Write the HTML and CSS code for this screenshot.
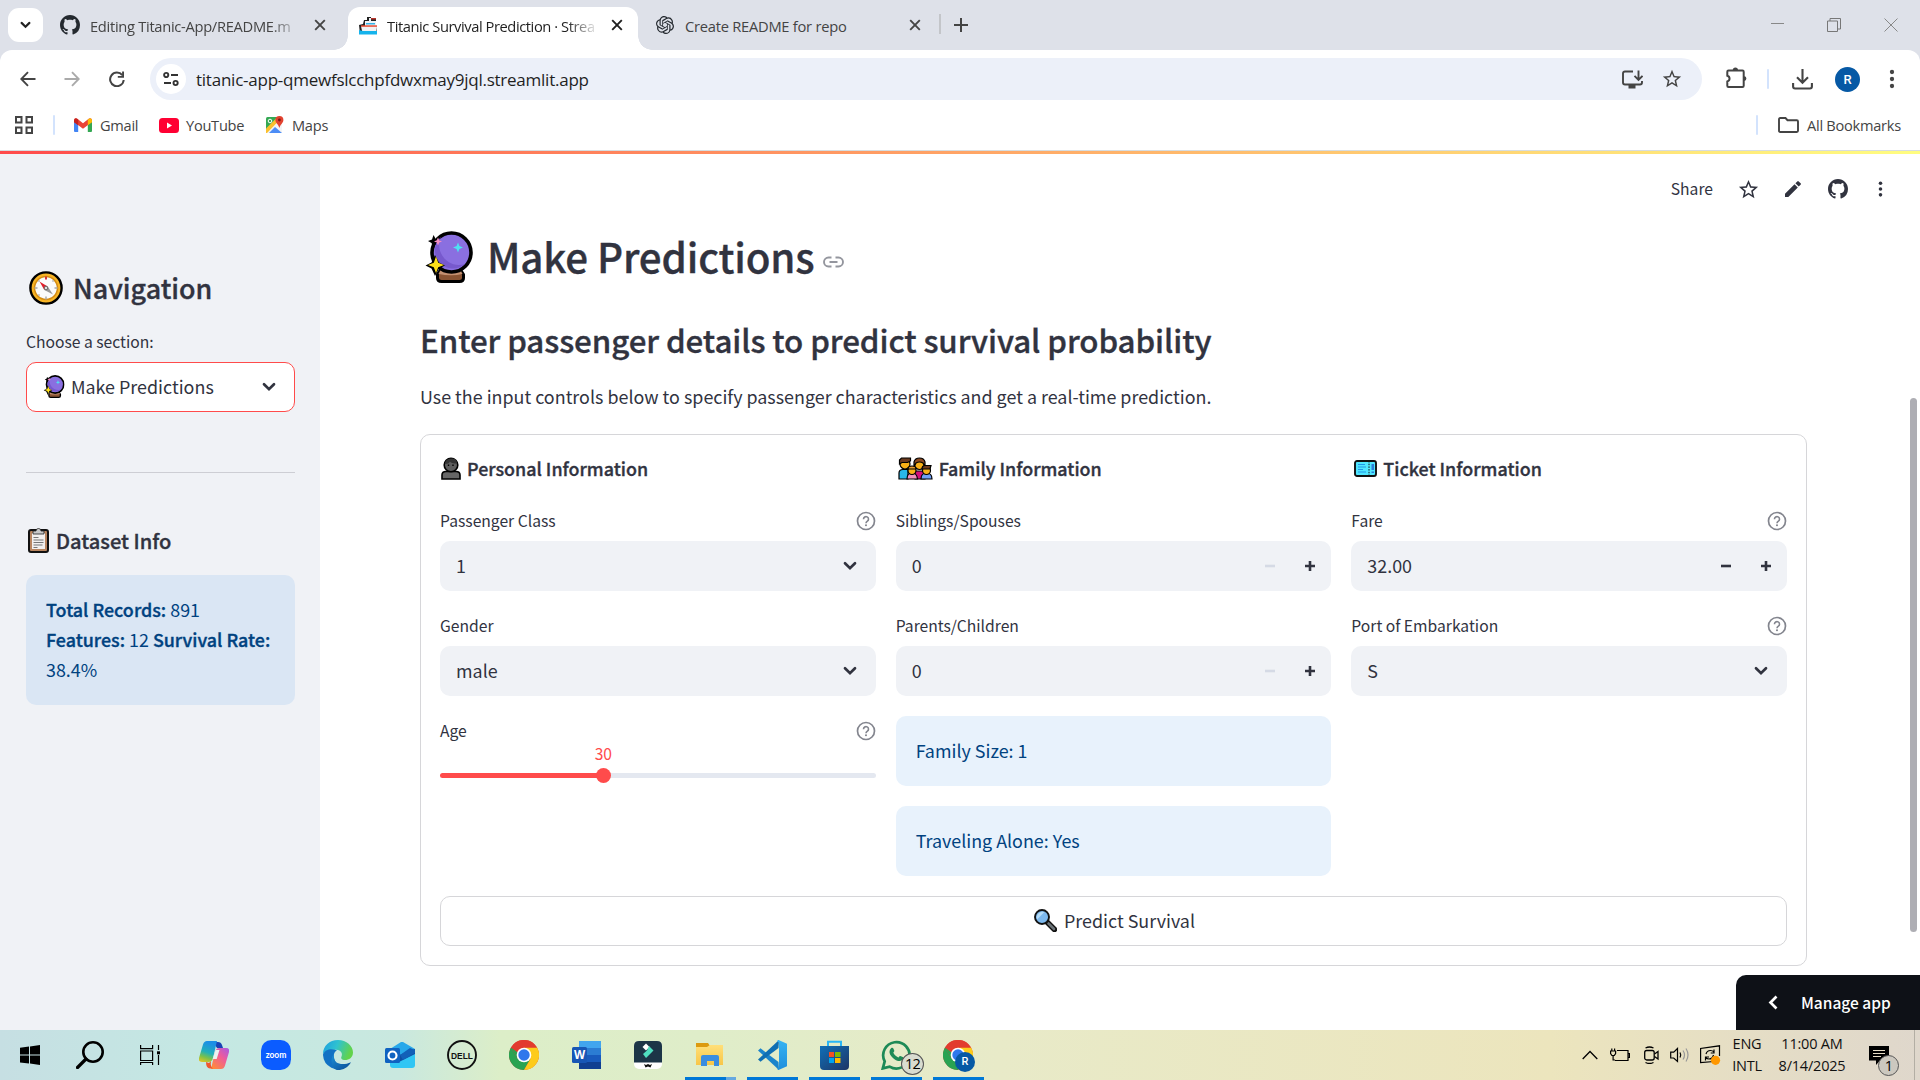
FILE: index.html
```html
<!DOCTYPE html>
<html lang="en">
<head>
<meta charset="utf-8">
<title>Titanic Survival Prediction · Streamlit</title>
<link rel="stylesheet" href="styles.css">
</head>
<body>
<svg class="defs" width="0" height="0" aria-hidden="true">
  <defs>
    <linearGradient id="edgeG" x1="0" y1="0" x2="1" y2="0.3"><stop offset="0" stop-color="#1b9de2"/><stop offset=".5" stop-color="#2fc2d0"/><stop offset="1" stop-color="#62d34c"/></linearGradient>
    <linearGradient id="edgeB" x1="0" y1="0" x2="1" y2="1"><stop offset="0" stop-color="#1a8fd8"/><stop offset="1" stop-color="#0c4c94"/></linearGradient>
    <linearGradient id="copA" x1="0.3" y1="0" x2="0" y2="1"><stop offset="0" stop-color="#1b8fe6"/><stop offset=".45" stop-color="#22b0b8"/><stop offset=".7" stop-color="#7cc14a"/><stop offset="1" stop-color="#f5c51d"/></linearGradient>
    <linearGradient id="copB" x1="1" y1="0" x2="0.2" y2="1"><stop offset="0" stop-color="#a45be6"/><stop offset=".45" stop-color="#ee5b9b"/><stop offset="1" stop-color="#ff8a3c"/></linearGradient>
    <linearGradient id="storeG" x1="0" y1="0" x2="1" y2="1"><stop offset="0" stop-color="#0f6fb8"/><stop offset="1" stop-color="#1f3564"/></linearGradient>
    <linearGradient id="vsG" x1="0" y1="0" x2="0" y2="1"><stop offset="0" stop-color="#35b3f3"/><stop offset="1" stop-color="#1f8fdc"/></linearGradient>
    <linearGradient id="foldG" x1="0" y1="0" x2="0" y2="1"><stop offset="0" stop-color="#ffdf79"/><stop offset="1" stop-color="#f8c648"/></linearGradient>
    <symbol id="github" viewBox="0 0 16 16"><path d="M8 0C3.58 0 0 3.58 0 8c0 3.54 2.29 6.53 5.47 7.59.4.07.55-.17.55-.38 0-.19-.01-.82-.01-1.49-2.01.37-2.53-.49-2.69-.94-.09-.23-.48-.94-.82-1.13-.28-.15-.68-.52-.01-.53.63-.01 1.08.58 1.23.82.72 1.21 1.87.87 2.33.66.07-.52.28-.87.51-1.07-1.78-.2-3.64-.89-3.64-3.95 0-.87.31-1.59.82-2.15-.08-.2-.36-1.02.08-2.12 0 0 .67-.21 2.2.82.64-.18 1.32-.27 2-.27s1.36.09 2 .27c1.53-1.04 2.2-.82 2.2-.82.44 1.1.16 1.92.08 2.12.51.56.82 1.27.82 2.15 0 3.07-1.87 3.75-3.65 3.95.29.25.54.73.54 1.48 0 1.07-.01 1.93-.01 2.2 0 .21.15.46.55.38A8.01 8.01 0 0 0 16 8c0-4.42-3.58-8-8-8z"/></symbol>
    <symbol id="close" viewBox="0 0 12 12"><path d="M1.2 1.2l9.6 9.6M10.800 1.200l-9.600 9.600" stroke="currentColor" stroke-width="1.900" fill="none"/></symbol>
    <symbol id="star" viewBox="0 0 24 24"><path d="M22 9.24l-7.190-.62L12 2 9.190 8.630 2 9.240l5.460 4.730L5.820 21 12 17.270 18.180 21l-1.630-7.030L22 9.240zM12 15.400l-3.760 2.270 1-4.280-3.320-2.880 4.380-.38L12 6.100l1.710 4.040 4.380.38-3.320 2.880 1 4.280L12 15.400z"/></symbol>
    <symbol id="dots" viewBox="0 0 6 20"><circle cx="3" cy="3" r="2.150"/><circle cx="3" cy="10" r="2.150"/><circle cx="3" cy="17" r="2.150"/></symbol>
    <symbol id="chev" viewBox="0 0 14 10"><path d="M2 2.300l5 4.900 5-4.900" fill="none" stroke="currentColor" stroke-width="2.700" stroke-linecap="round" stroke-linejoin="miter"/></symbol>
    <symbol id="help" viewBox="0 0 20 20"><circle cx="10" cy="10" r="8.500" fill="none" stroke="#83858e" stroke-width="1.700"/><path d="M7.500 8.200a2.500 2.500 0 1 1 3.900 2c-.9.600-1.400 1-1.400 2" fill="none" stroke="#83858e" stroke-width="1.600"/><circle cx="10" cy="14.300" r="1.050" fill="#83858e"/></symbol>
    <symbol id="ball" viewBox="0 0 48 52">
      <path d="M16 38h19l3.500 5.500v3.500q0 3.500-4 3.500H16.500q-4 0-4-3.500v-4z" fill="#8a5433" stroke="#000" stroke-width="3" stroke-linejoin="round"/>
      <path d="M16 38h19l2.500 5q-11 2.500-24 0z" fill="#c49070"/>
      <circle cx="26.500" cy="21.500" r="19.500" fill="#8a6fe0" stroke="#000" stroke-width="3.600"/>
      <path d="M16 6A18 18 0 1 0 40 33C24 38 9 22 16 6z" fill="#7759cd"/>
      <path d="M8.500 4l2.500 4.500L15.500 10 11 12l-2 5-2.500-5L3 10l4-1.500z" fill="#000"/><path d="M13 6.500l1.200 2.800L17 10.400l-2.800 1.100L13 14.400l-1.200-2.900L9 10.400l2.800-1.100z" fill="#f48fc4"/>
      <path d="M10 24l4 7.500 6 3-6 3-4 7.500-3.500-7.500-6-3 6-3z" fill="#000"/><path d="M11 25.500l2.200 6.300 5.800 2.200-5.800 2.200L11 42l-2.200-5.800L3 34l5.800-2.200z" fill="#ffe11a"/>
      <path d="M33 11.500l1.400 3.600 3.600 1.400-3.600 1.400L33 21.500l-1.400-3.600-3.600-1.400 3.600-1.400z" fill="#4fe0f2"/>
    </symbol>
    <symbol id="chrome" viewBox="0 0 30 30"><circle cx="15" cy="15" r="15" fill="#e23b2e"/><path d="M2 7.500A15 15 0 0 0 15 30l6.500-11.250L15 15z" fill="#29a352"/><path d="M28 7.500A15 15 0 0 1 15 30l6.500-11.200L15 7.500z" fill="#fdcb1b"/><path d="M2 7.500L8.500 18.800 15 15V7.500h13A15 15 0 0 0 2 7.500z" fill="#e23b2e"/><path d="M2 7.500l6.500 11.300L12 15z" fill="#29a352"/><circle cx="15" cy="15" r="7.300" fill="#fff"/><circle cx="15" cy="15" r="5.700" fill="#2f78ec"/></symbol>
  </defs>
</svg>

<header class="browser">
  <div class="tabstrip">
    <button class="tab-search"><svg width="11" height="8" viewBox="0 0 14 10"><use href="#chev"/></svg></button>
    <div class="tab tab-first"><svg class="fav" width="20" height="20"><use href="#github"/></svg><span class="tab-title t1">Editing Titanic-App/README.m</span><svg class="x" width="12" height="12"><use href="#close"/></svg></div>
    <div class="tab tab-active">
      <svg class="fav" width="18" height="19" viewBox="0 0 18 19"><path d="M0 9l4-1 1-4h3V1h4v1h5v8l1 3v5H1z" fill="#222"/><path d="M6 5h4V2h2v3h5v5H6z" fill="#eef3f6"/><path d="M12 2h5v1.500h-5z" fill="#b6332a"/><path d="M7 7h9v1.500H7z" fill="#34b5e8"/><path d="M2 10h16l-.500 5H3z" fill="#f2f2f2"/><path d="M2 9.300h16v1.500H2z" fill="#e8492f"/><path d="M0 14l4 1h14v3.500H0z" fill="#15b3ec"/></svg>
      <span class="tab-title t2">Titanic Survival Prediction · Strea</span><svg class="x" width="12" height="12"><use href="#close"/></svg></div>
    <div class="tab tab-third"><svg class="fav" width="18" height="18" viewBox="0 0 24 24"><path d="M22.2819 9.8211a5.9847 5.9847 0 0 0-.5157-4.9108 6.0462 6.0462 0 0 0-6.5098-2.9A6.0651 6.0651 0 0 0 4.9807 4.1818a5.9847 5.9847 0 0 0-3.9977 2.9 6.0462 6.0462 0 0 0 .7427 7.0966 5.98 5.98 0 0 0 .511 4.9107 6.051 6.051 0 0 0 6.5146 2.9001A5.9847 5.9847 0 0 0 13.2599 24a6.0557 6.0557 0 0 0 5.7718-4.2058 5.9894 5.9894 0 0 0 3.9977-2.9001 6.0557 6.0557 0 0 0-.7475-7.0729zm-9.022 12.6081a4.4755 4.4755 0 0 1-2.8764-1.0408l.1419-.0804 4.7783-2.7582a.7948.7948 0 0 0 .3927-.6813v-6.7369l2.02 1.1686a.071.071 0 0 1 .038.052v5.5826a4.504 4.504 0 0 1-4.4945 4.4944zm-9.6607-4.1254a4.4708 4.4708 0 0 1-.5346-3.0137l.142.0852 4.783 2.7582a.7712.7712 0 0 0 .7806 0l5.8428-3.3685v2.3324a.0804.0804 0 0 1-.0332.0615L9.74 19.9502a4.4992 4.4992 0 0 1-6.1408-1.6464zM2.3408 7.8956a4.485 4.485 0 0 1 2.3655-1.9728V11.6a.7664.7664 0 0 0 .3879.6765l5.8144 3.3543-2.0201 1.1685a.0757.0757 0 0 1-.071 0l-4.8303-2.7865A4.504 4.504 0 0 1 2.3408 7.872zm16.5963 3.8558L13.1038 8.364 15.1192 7.2a.0757.0757 0 0 1 .071 0l4.8303 2.7913a4.4944 4.4944 0 0 1-.6765 8.1042v-5.6772a.79.79 0 0 0-.407-.667zm2.0107-3.0231l-.142-.0852-4.7735-2.7818a.7759.7759 0 0 0-.7854 0L9.409 9.2297V6.8974a.0662.0662 0 0 1 .0284-.0615l4.8303-2.7866a4.4992 4.4992 0 0 1 6.6802 4.66zM8.3065 12.863l-2.02-1.1638a.0804.0804 0 0 1-.038-.0567V6.0742a4.4992 4.4992 0 0 1 7.3757-3.4537l-.142.0805L8.704 5.459a.7948.7948 0 0 0-.3927.6813zm1.0976-2.3654l2.602-1.4998 2.6069 1.4998v2.9994l-2.5974 1.4997-2.6067-1.4997Z"/></svg><span class="tab-title t3">Create README for repo</span><svg class="x" width="12" height="12"><use href="#close"/></svg></div>
    <span class="tab-sep"></span>
    <svg class="plus" width="14" height="14" viewBox="0 0 14 14"><path d="M7 0v14M0 7h14" stroke="#444" stroke-width="2"/></svg>
    <div class="win">
      <svg width="14" height="14" viewBox="0 0 14 14"><path d="M1 5.500h13" stroke="#888"/></svg>
      <svg width="14" height="14" viewBox="0 0 14 14"><path d="M.5 3h10v10.500H.5zM3 3V.5h10.500V11H11" fill="none" stroke="#777"/></svg>
      <svg width="14" height="14" viewBox="0 0 14 14"><path d="M.5.5l13 13M13.500.5l-13 13" stroke="#888"/></svg>
    </div>
  </div>

  <div class="toolbar">
    <svg class="nav-b" width="16" height="16" viewBox="0 0 16 16"><path d="M15.500 8H1.500M8 1.200L1.300 8 8 14.800" fill="none" stroke="#444" stroke-width="1.900"/></svg>
    <svg class="nav-f" width="16" height="16" viewBox="0 0 16 16"><path d="M.5 8h14M8 1.200L14.700 8 8 14.800" fill="none" stroke="#aaa" stroke-width="1.900"/></svg>
    <svg class="nav-r" width="16" height="16" viewBox="0 0 16 16"><path d="M13.300 4.200A6.800 6.800 0 1 0 14.700 9" fill="none" stroke="#444" stroke-width="2"/><path d="M15 .5v6.300H8.800V4.900h4.300V.5z" fill="#444"/></svg>
    <div class="omnibox">
      <span class="site"><svg width="16" height="16" viewBox="0 0 16 16" fill="none" stroke="#333" stroke-width="1.900"><circle cx="3.200" cy="4" r="2.100"/><path d="M8 4h7M1 12h7"/><circle cx="12.600" cy="12" r="2.100"/></svg></span>
      <span class="url">titanic-app-qmewfslcchpfdwxmay9jql.streamlit.app</span>
      <svg class="install" width="21" height="19" viewBox="0 0 21 19"><path d="M11 1.500H3q-2 0-2 2v9q0 2 2 2h15q2 0 2-2V11" fill="none" stroke="#444" stroke-width="1.900"/><path d="M6.500 15h7v3.500h-7z" fill="#444"/><path d="M16.500.5v9M12.500 5.800l4 4 4-4" fill="none" stroke="#444" stroke-width="1.900"/></svg>
      <svg width="22" height="22" viewBox="0 0 24 24" fill="#444"><use href="#star"/></svg>
    </div>
    <svg class="puzzle" width="21" height="21" viewBox="0 0 21 21"><path d="M2.500 3.500h14q1.200 0 1.200 1.200v14q0 1.200-1.200 1.200h-14q-1.200 0-1.200-1.200v-4.200a3 3 0 0 0 0-5.800v-4q0-1.200 1.200-1.200z" fill="none" stroke="#444" stroke-width="2"/><path d="M6.800 3a2.600 2.600 0 0 1 5.200 0zM18 9.200a2.400 2.400 0 0 1 0 4.800z" fill="#444"/></svg>
    <span class="tsep"></span>
    <svg class="dl" width="21" height="21" viewBox="0 0 21 21" fill="none" stroke="#444" stroke-width="2.100"><path d="M10.500 0v13.500M5 8.300l5.500 5.500L16 8.300M1.100 14v3.500q0 2 2 2h14.800q2 0 2-2V14"/></svg>
    <span class="avatar">R</span>
    <svg class="more" width="6" height="20" fill="#444"><use href="#dots"/></svg>
  </div>

  <div class="bookmarks">
    <svg width="18" height="18" viewBox="0 0 18 18" fill="none" stroke="#444" stroke-width="2"><path d="M1 1h5.500v5.500H1zM11.500 1H17v5.500h-5.500zM1 11.500h5.500V17H1zM11.500 11.500H17V17h-5.500z"/></svg>
    <span class="tsep bs1"></span>
    <svg class="gm" width="18" height="14" viewBox="0 0 18 14"><path d="M0 2.500V13q0 1 1 1h3.200V6z" fill="#4285f4"/><path d="M18 2.500V13q0 1-1 1h-3.200V6z" fill="#34a853"/><path d="M0 2Q.5-.5 3 .5l6 4.700 6-4.700q2.500-1 3 1.500v2.100l-9 6.700L0 4.100z" fill="#ea4335"/><path d="M0 2.200Q.3.300 2 .2L4.200 1.500v5.800L0 4.200z" fill="#c5221f"/><path d="M18 2.200Q17.700.3 16 .2l-2.200 1.300v5.800L18 4.200z" fill="#fbbc04"/></svg>
    <span class="bm b1">Gmail</span>
    <svg class="yt" width="20" height="15" viewBox="0 0 20 15"><rect width="20" height="15" rx="3.500" fill="#f03"/><path d="M8 4.500v6l5-3z" fill="#fff"/></svg>
    <span class="bm b2">YouTube</span>
    <svg class="mp" width="18" height="18" viewBox="0 0 18 18"><rect x="0" y="1" width="16" height="16" rx="1.500" fill="#34a853"/><path d="M0 17L14 3l2 2v12z" fill="#f4f4f4"/><path d="M0 12.500L10.500 2l2.500 2.500L1 17H0z" fill="#fbc02d"/><path d="M3 17l6-6 7 6z" fill="#4c8df6"/><circle cx="4" cy="5" r="1.800" fill="none" stroke="#fff"/><path d="M13.400 0a4 4 0 0 1 4 4c0 3-3 4-4 8-1-4-4-5-4-8a4 4 0 0 1 4-4z" fill="#e2422f"/><circle cx="13.400" cy="4" r="1.400" fill="#7d1712"/></svg>
    <span class="bm b3">Maps</span>
    <span class="tsep bs2"></span>
    <svg class="fold" width="21" height="16" viewBox="0 0 21 16"><path d="M1 2.200Q1 1 2.200 1h5.300l2 2.200h9.300Q20 3.200 20 4.400v9.400q0 1.200-1.200 1.200H2.200Q1 15 1 13.800z" fill="none" stroke="#444" stroke-width="1.900"/></svg>
    <span class="bm b4">All Bookmarks</span>
  </div>
</header>
<div class="decoration"></div>

<div class="app">
  <aside class="sidebar">
    <h2 class="nav-title"><svg width="34" height="34" viewBox="0 0 34 34"><circle cx="17" cy="17" r="15.600" fill="#f8b526" stroke="#000" stroke-width="2.400"/><circle cx="17" cy="17" r="11.500" fill="#fbfbfb" stroke="#d58c12" stroke-width="1.500"/><path d="M17 5.500v3" stroke="#d13438" stroke-width="2"/><path d="M17 25.500v3M5.500 17h3M25.500 17h3M9.500 9.500l1 1M24.500 9.500l-1 1M9.500 24.500l1-1" stroke="#aaa" stroke-width="1.500"/><path d="M10.500 10.500l8.200 5-3.400 3.400z" fill="#e01e2b"/><path d="M24 23.500l-8.700-4.600 3.400-3.400z" fill="#999"/><circle cx="17" cy="17" r="1.800" fill="#ddd" stroke="#666"/></svg><span class="n1">Navigation</span></h2>
    <label class="label">Choose a section:</label>
    <div class="select focus"><svg width="22" height="23" viewBox="0 0 48 52"><use href="#ball"/></svg><span>Make Predictions</span><svg class="chev" width="14" height="10"><use href="#chev"/></svg></div>
    <hr>
    <h3 class="ds-title"><svg width="21" height="26" viewBox="0 0 21 26"><rect x="1" y="3" width="19" height="22" rx="2" fill="#b9855f" stroke="#111" stroke-width="2"/><path d="M4 6h13v16H4z" fill="#f3f0ee"/><path d="M5 7V4h3a2.500 2.500 0 0 1 5 0h3v3z" fill="#c9c9c9" stroke="#222" stroke-width=".8"/><path d="M5.500 10.500h5M5.500 13h10M5.500 15.500h10M5.500 18h9M5.500 20.500h4" stroke="#777" stroke-width="1"/></svg><span>Dataset Info</span></h3>
    <div class="info dark"><b>Total Records:</b> 891<br><b>Features:</b> 12 <b>Survival Rate:</b><br>38.4%</div>
  </aside>

  <main class="main">
    <div class="app-tools">
      <span class="share">Share</span>
      <svg class="a1" width="23" height="23" viewBox="0 0 24 24"><use href="#star"/></svg>
      <svg class="a2" width="16" height="16" viewBox="0 0 16 16"><path d="M0 12.700L9.500 3.200l3.300 3.300L3.300 16H0zM10.400 2.300l1.900-1.900q.7-.6 1.400 0l1.900 1.900q.7.700 0 1.400l-1.900 1.900z"/></svg>
      <svg class="a3" width="20" height="20"><use href="#github"/></svg>
      <svg class="a4" width="5" height="18" viewBox="0 0 6 20"><use href="#dots"/></svg>
    </div>
    <h1><svg width="48" height="52"><use href="#ball"/></svg><span>Make Predictions</span><svg class="link" width="21" height="12" viewBox="0 0 21 12"><path d="M8.500 1.500h-3a4.500 4.500 0 0 0 0 9h3M12.500 1.500h3a4.500 4.500 0 0 1 0 9h-3M6.500 6h8" fill="none" stroke="#94969e" stroke-width="1.900"/></svg></h1>
    <h2 class="sub">Enter passenger details to predict survival probability</h2>
    <p class="lead">Use the input controls below to specify passenger characteristics and get a real-time prediction.</p>

    <form class="form">
      <div class="cols">
        <section class="col">
          <h4><svg class="e1" width="20" height="23" viewBox="0 0 20 23"><path d="M1 22v-4q0-3.500 4-3.500h10q4 0 4 3.500v4z" fill="#666" stroke="#000" stroke-width="1.600"/><circle cx="10" cy="8" r="6.800" fill="#5e5e5e" stroke="#000" stroke-width="1.600"/><path d="M4 7q0-5 6-5.500t6 5q-6 0-7-2-1 2.500-5 2.500z" fill="#333"/><path d="M7.500 7.500v1.500M12 7.500v1.500" stroke="#000" stroke-width="1.400"/></svg><span>Personal Information</span></h4>
          <div class="field"><div class="label">Passenger Class<svg width="20" height="20"><use href="#help"/></svg></div><div class="select"><span>1</span><svg class="chev" width="14" height="10"><use href="#chev"/></svg></div></div>
          <div class="field"><div class="label">Gender</div><div class="select"><span>male</span><svg class="chev" width="14" height="10"><use href="#chev"/></svg></div></div>
          <div class="field"><div class="label">Age<svg width="20" height="20"><use href="#help"/></svg></div>
            <div class="slider"><div class="track" style="background:linear-gradient(to right,#ff4b4b 37.5%,#e4e8f0 37.5%)"></div><div class="thumb" style="left:37.5%"><span>30</span></div></div></div>
        </section>
        <section class="col">
          <h4><svg class="e2" width="35" height="23" viewBox="0 0 35 23" stroke="#000" stroke-width="1.200"><path d="M1 22v-6q0-3.500 4-3.500h5v9.500z" fill="#29b7e8"/><path d="M17 22v-8h6q4 0 4 3v5z" fill="#d6107a"/><circle cx="7" cy="7" r="5" fill="#f9b016"/><path d="M1.500 7V3l2-2h9v3l-3 1.500H4z" fill="#6b3a1e"/><circle cx="21.500" cy="7.500" r="5" fill="#f9b016"/><path d="M16 10V5q1-4 5.500-4T27 5v5l-2-4q-3.500-2-7 0z" fill="#8b4a22"/><path d="M9 22q0-6 5-6t5.500 6z" fill="#f291bd"/><circle cx="14" cy="13.500" r="4" fill="#f9b016"/><path d="M10 12q0-3 4-3t4 3z" fill="#e59a2e"/><path d="M23 22q0-6 5.500-6t5.500 6z" fill="#6fa0f7"/><circle cx="28.500" cy="13.500" r="4" fill="#f9b016"/><path d="M24 12q0-3.500 3-3.500h6l-1 3.500z" fill="#6b3a1e"/></svg><span>Family Information</span></h4>
          <div class="field"><div class="label">Siblings/Spouses</div><div class="select num"><span>0</span><svg class="mn off" width="10" height="10" viewBox="0 0 10 10"><path d="M0 5h10"/></svg><svg class="pl" width="10" height="10" viewBox="0 0 10 10"><path d="M0 5h10M5 0v10"/></svg></div></div>
          <div class="field"><div class="label">Parents/Children</div><div class="select num"><span>0</span><svg class="mn off" width="10" height="10" viewBox="0 0 10 10"><path d="M0 5h10"/></svg><svg class="pl" width="10" height="10" viewBox="0 0 10 10"><path d="M0 5h10M5 0v10"/></svg></div></div>
          <div class="info">Family Size: 1</div>
          <div class="info">Traveling Alone: Yes</div>
        </section>
        <section class="col">
          <h4><svg class="e3" width="23" height="17" viewBox="0 0 23 17"><rect x="1" y="1" width="21" height="15" rx="2" fill="#50e6ff" stroke="#111" stroke-width="1.900"/><path d="M15 1v15" stroke="#111" stroke-dasharray="1.500 1.200"/><path d="M4 4.500h7M4 7h8M4 9.500h5M4 12h8" stroke="#2196e8" stroke-width="1.200"/><path d="M17.500 4h2.500v6h-2.500zM17.500 11.500H20V13h-2.500z" fill="#2b7fd8"/></svg><span>Ticket Information</span></h4>
          <div class="field"><div class="label">Fare<svg width="20" height="20"><use href="#help"/></svg></div><div class="select num"><span>32.00</span><svg class="mn" width="10" height="10" viewBox="0 0 10 10"><path d="M0 5h10"/></svg><svg class="pl" width="10" height="10" viewBox="0 0 10 10"><path d="M0 5h10M5 0v10"/></svg></div></div>
          <div class="field"><div class="label">Port of Embarkation<svg width="20" height="20"><use href="#help"/></svg></div><div class="select"><span>S</span><svg class="chev" width="14" height="10"><use href="#chev"/></svg></div></div>
        </section>
      </div>
      <button class="predict" type="button"><svg width="23" height="23" viewBox="0 0 23 23"><path d="M13 13l7.500 7.500" stroke="#111" stroke-width="5.500" stroke-linecap="round"/><path d="M14.500 14.500l5.500 5.500" stroke="#6b7378" stroke-width="2.600" stroke-linecap="round"/><circle cx="8" cy="8" r="7" fill="#7db9ee" stroke="#111" stroke-width="1.900"/><path d="M3 10.500A6 6 0 0 1 10.500 3z" fill="#b5dcf8"/></svg><span>Predict Survival</span></button>
    </form>
    <div class="scroll-thumb"></div>
    <div class="manage"><svg width="10" height="15" viewBox="0 0 10 15"><path d="M8.500 1.500l-6 6 6 6" fill="none" stroke="#fff" stroke-width="2.700"/></svg><span>Manage app</span></div>
  </main>
</div>

<footer class="taskbar">
  <span class="tb sys"><svg width="20" height="20" viewBox="0 0 20 20"><path d="M0 2.800l9-1.200v8H0zM10 1.400L20 0v9.600H10zM0 10.600h9v8l-9-1.200zM10 10.600h10V20l-10-1.400z"/></svg></span>
  <span class="tb sys"><svg width="28" height="28" viewBox="0 0 28 28"><circle cx="17" cy="11" r="9.700" fill="none" stroke="#000" stroke-width="2.600"/><path d="M10 18l-8.500 8.500" stroke="#000" stroke-width="3.200" stroke-linecap="round"/></svg></span>
  <span class="tb sys last"><svg width="20" height="20" viewBox="0 0 20 20" fill="none" stroke="#000" stroke-width="1.200"><path d="M.6 0v3.600h12V0M.6 6h12v9.500H.6zM.6 20v-2.500h12V20M18.500 0v5M18.500 10v10"/><path d="M17 6.300h3v3h-3z" fill="#000" stroke="none"/></svg></span>
  <span class="tb"><svg width="30" height="28" viewBox="0 0 30 28"><path d="M14 1h5q3 0 4 3l1 3h-6z" fill="#1843b5"/><path d="M8 0h10l-4 17q-1 4-4.500 4H3q-4 0-3-4L4 3.500Q5 0 8 0z" fill="url(#copA)"/><path d="M22 28H12l4-17q1-4 4.500-4H27q4 0 3 4l-4 13.500Q25 28 22 28z" fill="url(#copB)"/><path d="M12 20l-2 2-3-1q0 6 4 6.500h3q-3-2-2-7.500z" fill="#f0562e"/><path d="M16.500 9h4l-2.800 9h-4z" fill="#e9f3f0"/></svg></span>
  <span class="tb"><svg width="30" height="30" viewBox="0 0 30 30"><rect width="30" height="30" rx="10.500" fill="#0b5cff"/><text x="15" y="17.500" text-anchor="middle" font-family="Lato, sans-serif" font-weight="700" font-size="8.500" fill="#fff">zoom</text></svg></span>
  <span class="tb"><svg width="30" height="30" viewBox="0 0 30 30"><path d="M0 14C0 6 6.500 0 15 0s15 6 15 12.500c0 5-4 7.500-8 7.500-3 0-4.500-1.500-3.500-3.500 1-2 .5-5.500-3.500-6.500C9 9 3 10 0 14z" fill="url(#edgeG)"/><path d="M0 14.500C2 9 9 8 14 10.500c-3 1-4 5-2.500 9 1.500 5 6.500 9.500 12 7A15 15 0 0 1 0 15z" fill="#1272c4"/><path d="M11 14c-2 9 7 12.500 17 8.200-3 5.800-9.500 8.500-15 7.600-5-2.800-6-11.800-2-15.800z" fill="url(#edgeB)"/></svg></span>
  <span class="tb"><svg width="30" height="26" viewBox="0 0 30 26"><path d="M5 7L16 0q1-.4 2 0l12 7v10L6 22z" fill="#28a8ea"/><path d="M30 8v15q0 3-3 3H8q-3 0-3-3v-8z" fill="#30c6f4"/><path d="M30 7v5L14 20H6v-4z" fill="#0f4fa3"/><path d="M15 13l10-7 5 2v3L18 18z" fill="#1260b8"/><rect y="6" width="15" height="15" rx="1.500" fill="#0f62c1"/><circle cx="7.500" cy="13.500" r="4" fill="none" stroke="#fff" stroke-width="2.200"/></svg></span>
  <span class="tb"><svg width="30" height="30" viewBox="0 0 30 30"><circle cx="15" cy="15" r="14" fill="none" stroke="#111" stroke-width="1.900"/><text x="15" y="18.500" text-anchor="middle" font-family="Liberation Sans, sans-serif" font-weight="700" font-size="9.500" textLength="22" lengthAdjust="spacingAndGlyphs" fill="#111">DELL</text></svg></span>
  <span class="tb"><svg width="30" height="30"><use href="#chrome"/></svg></span>
  <span class="tb"><svg width="29" height="28" viewBox="0 0 29 28"><path d="M7 0h22v7H7z" fill="#41a5ee"/><path d="M7 7h22v7H7z" fill="#2b7cd3"/><path d="M7 14h22v7H7z" fill="#185abd"/><path d="M7 21h22v7H7z" fill="#103f91"/><rect y="6" width="15" height="16" rx="1.500" fill="#1756b5"/><text x="7.500" y="18.300" text-anchor="middle" font-family="Open Sans, sans-serif" font-weight="700" font-size="11.500" fill="#fff">W</text></svg></span>
  <span class="tb"><svg width="28" height="28" viewBox="0 0 28 28"><rect width="28" height="28" rx="5" fill="#fff"/><path d="M0 21.500V5q0-5 5-5h18q5 0 5 5v16.500z" fill="#1c3547"/><path d="M12 2.500L15.500 6 12 9.500 8.500 6z" fill="#fff"/><path d="M15 5l4.500 4.500L12 17l-3-4 4-3.500z" fill="#50dfc0"/><path d="M10 23l2 1 2-1 2 1 2-1-1.500 3.500L14 25.500l-2.500 1z" fill="#111"/></svg></span>
  <span class="tb run light"><svg width="28" height="24" viewBox="0 0 28 24"><path d="M0 0h12l2 3v2H0z" fill="#dc9a10"/><path d="M0 4h11l3-2h13v20H0z" fill="url(#foldG)"/><path d="M5 23V14q0-2 2-2h14q2 0 2 2v9h-5v-5h-7v5z" fill="#3b8de0"/></svg></span>
  <span class="tb run"><svg width="30" height="30" viewBox="0 0 30 30"><path d="M1 10.500l2.500-2.200 18 13.800L22 30z" fill="#1b84cb"/><path d="M1 19.500l2.500 2.200 18-13.600L22 0z" fill="#0f6fb3"/><path d="M21.500 0L30 3.800v22.400L21.500 30l-1.800-1.200 2.300-.8V2.500L19.700 1z" fill="url(#vsG)"/></svg></span>
  <span class="tb run"><svg width="29" height="30" viewBox="0 0 29 30"><path d="M8 8V1.800h13V8" fill="none" stroke="#28b5f5" stroke-width="2"/><path d="M0 6h29v20q0 4-4 4H4q-4 0-4-4z" fill="url(#storeG)"/><path d="M9 12h5v5H9z" fill="#f25022"/><path d="M15 12h5.500v5H15z" fill="#7fba00"/><path d="M9 18h5v5H9z" fill="#00a4ef"/><path d="M15 18h5.500v5H15z" fill="#ffb900"/></svg></span>
  <span class="tb run"><svg width="30" height="30" viewBox="0 0 30 30"><path d="M1.800 28.400l1.900-7A13.200 13.200 0 1 1 8.600 26.600z" fill="none" stroke="#1d8a57" stroke-width="2.700"/><path d="M10.300 8c1-.8 1.800-.2 2.200.8l.8 2c.2.800-.8 1.500-1 2 1 2.200 2.800 3.800 5 4.600.7-.4 1.200-1.700 2-1.500l2.500 1.200c1 .5.700 1.700 0 2.500-2 2.200-5 1.600-8-.2-2.500-1.600-5-4.600-5.300-7-.1-1.600.5-3.400 1.800-4.400z" fill="#1d8a57"/></svg><i class="badge">12</i></span>
  <span class="tb run"><svg width="30" height="30"><use href="#chrome"/></svg><i class="badge r">R</i></span>

  <div class="tray">
    <svg width="16" height="10" viewBox="0 0 16 10"><path d="M.7 9L8 1.500 15.300 9" fill="none" stroke="#000" stroke-width="1.300"/></svg>
    <svg class="y1" width="20" height="14" viewBox="0 0 20 14" fill="none" stroke="#000" stroke-width="1.200"><path d="M7 2.500h11v10H5M18 5.500h1.400v4H18M.6 3h5v2.500l-1.300 2H1.900L.6 5.500zM1.800 3V.5M4.600 3V.5M3.100 7.500v4.500h2"/></svg>
    <svg class="y2" width="15" height="18" viewBox="0 0 15 18" fill="none" stroke="#000" stroke-width="1.300"><rect x=".7" y="4.500" width="9.500" height="9.500" rx="2"/><path d="M10.500 8l3.500-2.500v7.500l-3.500-2.500M1.500 2q4-2 8 0M1.500 16.500q4 2 8 0"/></svg>
    <svg class="y3" width="21" height="16" viewBox="0 0 21 16" fill="none" stroke="#000" stroke-width="1.200"><path d="M.7 5.200h3L7.500 1.500v13L3.700 11h-3zM10 5.500q1.500 2.500 0 5"/><path d="M13 3.500q3 4.500 0 9M16 1.500q4 6.500 0 13" stroke="#999"/></svg>
    <svg class="y4" width="21" height="20" viewBox="0 0 21 20" fill="none" stroke="#000" stroke-width="1.200"><path d="M14 16.500L.6 17.500V3.500L19.500.8V11M6 9q1-3.500 4.500-3.500 2 0 3.500 1.500M14 4.500V8h-3.300M13.500 10q-1 4-4.500 4-2 0-3.500-1.500M5.500 15.500V12H9"/><circle cx="15.500" cy="15.300" r="4.600" fill="#ff9800" stroke="none"/></svg>
    <div class="tt lang"><span class="w1">ENG</span><span class="w2">INTL</span></div>
    <div class="tt clock"><span class="w3">11:00 AM</span><span class="w4">8/14/2025</span></div>
    <div class="ac"><svg width="20" height="19" viewBox="0 0 20 19"><path d="M0 0h20v14.500H11L7 19v-4.500H0z"/><path d="M4 4.500h12M4 7.500h12M4 10.500h8" stroke="#e6ddc6" stroke-width="1.200"/></svg><i class="badge one">1</i></div>
    <span class="peek"></span>
  </div>
</footer>
</body>
</html>
```
FILE: styles.css
```css
* { box-sizing: border-box; }
body { margin: 0; width: 1920px; height: 1080px; overflow: hidden; display: flex; flex-direction: column; background: #fff; color: #31333f; font-family: "Noto Sans CJK JP", "Noto Sans CJK SC", sans-serif; font-size: 17.9px; }
svg { display: block; flex: none; }
.defs { position: absolute; }
h1, h2, h3, h4, p { margin: 0; }
h1, h2, h3, h4, b { -webkit-text-stroke: .35px currentColor; }
button { font: inherit; color: inherit; margin: 0; padding: 0; }
b { font-weight: 500; }

/* browser chrome */
.browser { font-family: "Open Sans", "Noto Sans", sans-serif; height: 150px; background: #dee1e9; color: #444; }
.tabstrip { display: flex; height: 50px; align-items: flex-start; }
.tab-search { margin: 8px 0 0 8px; width: 35px; height: 34px; border: 0; border-radius: 11px; background: #fff; display: grid; place-items: center; color: #222; }
.tab { display: flex; align-items: center; height: 36px; margin-top: 7px; }
.tab .fav { fill: #24292f; }
.tab-title { font-size: 14.700px; white-space: nowrap; line-height: 24px; padding-top: 1px; }
.tab-first { width: 305px; padding-left: 17px; }
.tab-first .tab-title { margin-left: 10px; width: 210px; }
.tab-first .x { margin-left: 14px; }
.tab-active { width: 290px; height: 43px; padding: 0 0 7px 11px; background: #fff; border-radius: 12px 12px 0 0; color: #1f1f1f; position: relative; }
.tab-active::before, .tab-active::after { content: ""; position: absolute; bottom: 0; width: 14px; height: 14px; }
.tab-active::before { left: -14px; background: radial-gradient(circle at 0 0, transparent 13.500px, #fff 14px); }
.tab-active::after { right: -14px; background: radial-gradient(circle at 100% 0, transparent 13.500px, #fff 14px); }
.tab-active .tab-title { margin-left: 10px; width: 210px; }
.tab-active .x { margin-left: 14px; }
.tab-third { width: 301px; padding-left: 18px; }
.tab-third .tab-title { margin-left: 11px; width: 212px; }
.tab-third .x { margin-left: 12px; }
.t1, .t2 { -webkit-mask-image: linear-gradient(to right, #000 180px, transparent 212px); mask-image: linear-gradient(to right, #000 180px, transparent 212px); }
.t1 { letter-spacing: -.3px; }
.t2 { letter-spacing: -.43px; }
.t3 { letter-spacing: -.25px; }
.tab-sep { width: 2px; height: 20px; background: #c3c5c9; margin: 14px 13px 0 0; }
.plus { margin-top: 18px; }
.win { margin: 18px 22px 0 auto; display: flex; gap: 43px; }
.toolbar { height: 50px; background: #fff; border-radius: 12px 12px 0 0; display: flex; align-items: center; padding: 8px 25px 0 20px; }
.nav-f { margin-left: 28px; }
.nav-r { margin-left: 29px; }
.omnibox { margin-left: 25px; width: 1553px; height: 42px; border-radius: 21px; background: #ecf0f9; display: flex; align-items: center; padding: 0 19px 0 6px; }
.site { width: 30px; height: 30px; border-radius: 50%; background: #fff; display: grid; place-items: center; }
.url { margin-left: 10px; font-size: 17px; line-height: 24px; letter-spacing: -.24px; color: #1f1f1f; white-space: nowrap; padding-top: 1px; }
.install { margin-left: auto; margin-right: 18px; }
.puzzle { margin-left: 24px; margin-top: -3px; }
.tsep { width: 2px; height: 20px; border-radius: 1px; background: #d3e3fd; }
.puzzle + .tsep { margin-left: 20px; }
.dl { margin-left: 23px; }
.avatar { margin-left: 22px; width: 25px; height: 25px; border-radius: 50%; background: #0659a5; color: #fff; font: 500 13px/25px Roboto, sans-serif; text-align: center; }
.more { margin-left: 29px; margin-top: -1px; }
.bookmarks { height: 50px; background: #fff; display: flex; align-items: center; padding: 0 18px 0 15px; border-bottom: 0; }
.bs1 { margin-left: 20px; }
.gm { margin-left: 19px; }
.bm { font-size: 14.600px; letter-spacing: -.26px; margin-left: 8px; line-height: 20px; white-space: nowrap; }
.b1 { width: 38px; }
.yt { margin-left: 21px; }
.b2 { width: 58px; margin-left: 7px; }
.mp { margin-left: 22px; }
.bs2 { margin-left: auto; }
.fold { margin-left: 20px; }
.b4 { margin-left: 8px; width: 95px; }
.decoration { height: 4px; border-top: 1px solid #d7dde0; background: linear-gradient(to right, #ff4b4b, #fffd80); }

/* application */
.app { height: 876px; display: flex; }
.sidebar { width: 320px; background: #f0f2f6; padding: 115px 25px 0 26px; }
.nav-title { display: flex; align-items: center; height: 36px; font-size: 26.900px; font-weight: 500; padding-left: 3px; line-height: 36px; }
.nav-title span { margin-left: 10px; padding-top: 2px; }
.nav-title svg { margin-top: 1px; }
.label { display: flex; justify-content: space-between; align-items: center; height: 30px; line-height: 30px; font-size: 15.660px; margin-bottom: 5px; }
.sidebar .label { margin-top: 22px; }
.select { display: flex; align-items: center; height: 50px; border-radius: 10px; background: #f0f2f6; padding: 0 19px 0 16px; line-height: 30px; }
.select span { padding-bottom: 3px; }
.select .chev { margin-left: auto; }
.focus { background: #fff; border: 1px solid #ff4b4b; padding-left: 16px; padding-right: 18px; }
.focus svg:first-child { margin-bottom: 2px; }
.focus span { margin-left: 6px; }
hr { border: 0; height: 1px; background: #cdced4; margin: 60px 0 52px; }
.ds-title { display: flex; height: 30px; align-items: center; line-height: 30px; font-size: 20.100px; font-weight: 500; padding-left: 2px; margin-bottom: 20px; }
.ds-title span { margin-left: 7px; padding-top: 2px; }
.info { border-radius: 10px; background: #e8f2fc; color: #004280; padding: 18.500px 20px; line-height: 30px; height: 70px; white-space: nowrap; }
.dark { background: #dae6f4; height: 130px; }

.main { flex: 1; position: relative; padding: 0 113px 0 100px; }
.app-tools { height: 70px; margin-right: -83px; display: flex; justify-content: flex-end; align-items: center; padding-right: 7px; font-size: 15.660px; fill: #31333f; }
.share { padding-bottom: 2px; }
.a1 { margin-left: 24px; }
.a2 { margin-left: 25px; }
.a3 { margin-left: 27px; }
.a4 { margin-left: 30px; }
h1 { height: 54px; margin-top: 4px; display: flex; align-items: center; font-size: 40.300px; line-height: 54px; font-weight: 500; padding-left: 5px; }
h1 svg:first-child { margin-top: 4px; }
h1 span { margin-left: 14px; padding-top: 2px; letter-spacing: -.15px; }
h1 .link { margin: 13px 0 0 9px; }
.sub { margin-top: 37px; height: 42px; font-size: 31.300px; line-height: 42px; font-weight: 500; white-space: nowrap; letter-spacing: -.09px; }
.lead { margin-top: 20px; height: 30px; line-height: 30px; white-space: nowrap; }
.form { margin-top: 23px; height: 532px; width: 1387px; border: 1px solid #d6d6d9; border-radius: 10px; padding: 18px 19px 19px; }
.cols { display: grid; grid-template-columns: repeat(3, 1fr); gap: 20px; height: 423px; }
.col { display: flex; flex-direction: column; gap: 20px; }
h4 { display: flex; align-items: center; height: 30px; margin-bottom: 3px; line-height: 30px; font-size: 17.900px; font-weight: 500; }
.e1 { margin: 1px 6px 0 1px; }
.e2 { margin: 1px 6px 0 2px; }
.e3 { margin: 1px 6px 0 3px; }
.field { height: 85px; }
.num svg { fill: none; stroke: #31333f; stroke-width: 2.600; }
.num .mn { margin-left: auto; margin-right: 30px; }
.num { padding-right: 16px; }
.num .off { stroke: #d5dae5; }
.slider { height: 50px; position: relative; padding-top: 22px; }
.track { height: 5px; border-radius: 3px; }
.thumb { position: absolute; top: 17px; width: 15px; height: 15px; margin-left: -7.500px; border-radius: 50%; background: #ff4b4b; }
.thumb span { position: absolute; left: -10px; width: 35px; top: -26px; line-height: 24px; text-align: center; color: #ff4b4b; font-size: 15.660px; }
.predict { margin-top: 20px; width: 100%; height: 50px; border: 1px solid #d6d6d9; border-radius: 10px; background: #fff; display: flex; align-items: center; justify-content: center; gap: 7px; padding-left: 2px; }
.predict span { padding-bottom: 3px; }
.predict svg { margin-bottom: 2px; }
.scroll-thumb { position: absolute; right: 3px; top: 244px; width: 7px; height: 534px; border-radius: 4px; background: #aeaeb4; }
.manage { position: absolute; right: 0; bottom: 0; width: 184px; height: 55px; border-radius: 10px 0 0 0; background: #0e1117; color: #fff; display: flex; align-items: center; padding-left: 32px; font-size: 15.500px; font-weight: 500; }
.manage span { margin-left: 23px; padding-bottom: 1px; }

/* taskbar */
.taskbar { height: 50px; display: flex; background: linear-gradient(to right, #c6dfe3 0, #c4e8e3 200px, #c9e8df 400px, #dceec8 500px, #dfedc9 700px, #e8eac8 1000px, #ece5bd 1550px, #dfd7cc 1920px); font-family: "Open Sans", sans-serif; }
.tb { width: 62px; height: 50px; display: grid; place-items: center; position: relative; }
.tb.sys { width: 60px; }
.tb.last { width: 63px; padding-right: 3px; }
.run::after { content: ""; position: absolute; left: 6px; bottom: 0; width: 51px; height: 3px; background: #0078d7; }
.light::after { background: linear-gradient(to right, #0078d7 41px, #66a9e0 41px); }
.badge { position: absolute; font-style: normal; border-radius: 50%; left: 36px; top: 23px; width: 23px; height: 22px; background: #d9dcd0; border: 1px solid #555; color: #000; font-size: 14.500px; line-height: 20px; text-align: center; letter-spacing: -.8px; }
.badge.r { left: 28px; top: 22px; width: 20px; height: 20px; background: #0659a5; border: 0; color: #fff; font: 500 11px/20px Roboto, sans-serif; letter-spacing: 0; }
.tray { margin-left: auto; display: flex; align-items: center; height: 50px; }
.y1 { margin-left: 12px; }
.y2 { margin-left: 14px; }
.y3 { margin-left: 11px; }
.y4 { margin-left: 9px; }
.tt { display: flex; flex-direction: column; align-items: center; font-size: 14.500px; line-height: 22px; color: #111; white-space: nowrap; letter-spacing: -.2px; }
.lang { margin-left: 11px; width: 30px; }
.clock { margin-left: 15px; width: 70px; }
.ac { margin-left: 22px; position: relative; width: 20px; height: 19px; }
.badge.one { left: 9px; top: 9px; width: 21px; height: 21px; background: #ccc8bf; line-height: 19px; }
.peek { margin-left: 25px; width: 1px; height: 50px; background: #b3aea4; margin-right: 5px; }
```
